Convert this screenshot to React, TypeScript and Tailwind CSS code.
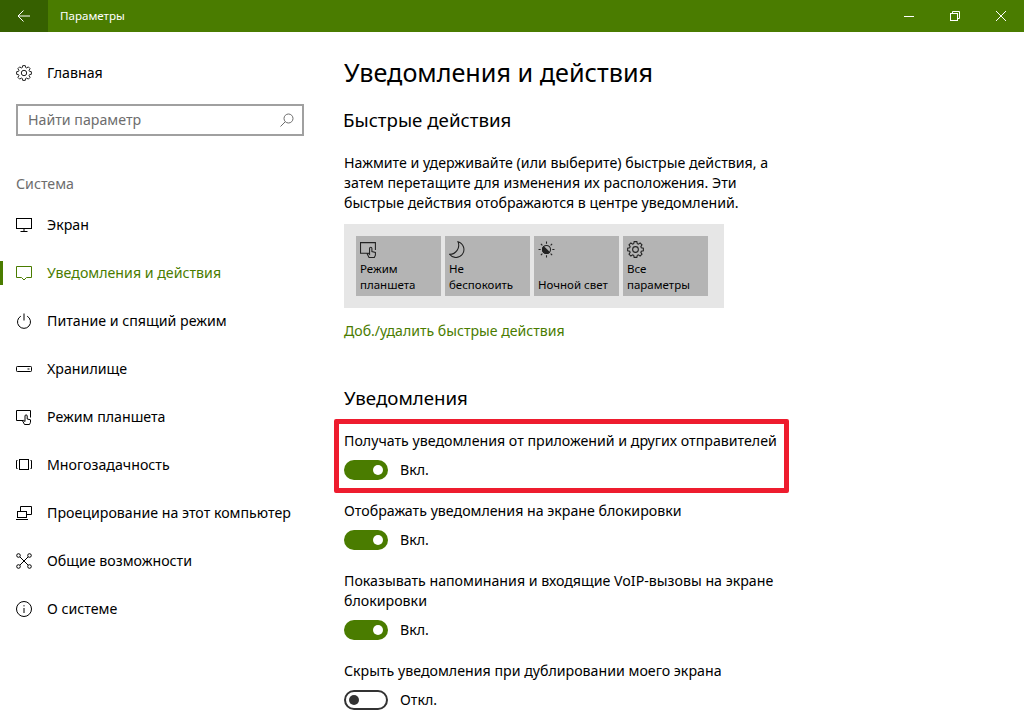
import * as React from "react";

const base = { fill: "none", stroke: "currentColor", strokeWidth: 1 } as const;

function Svg({ children, size = 16, className = "" }: { children: React.ReactNode; size?: number; className?: string }) {
  return (
    <svg width={size} height={size} viewBox="0 0 16 16" className={className} {...base}>
      {children}
    </svg>
  );
}

// eight toothed cog, same outline as the settings glyph
const gearPath = Array.from({ length: 8 }, (_, i) => {
  const a = (i * Math.PI) / 4;
  const pt = (r: number, d: number) => `${(8 + r * Math.sin(a + d)).toFixed(2)} ${(8 - r * Math.cos(a + d)).toFixed(2)}`;
  return `${i === 0 ? "M" : "L"}${pt(5.7, -0.3)}L${pt(7.5, -0.17)}L${pt(7.5, 0.17)}L${pt(5.7, 0.3)}`;
}).join("") + "Z";

const gear = (
  <>
    <path d={gearPath} />
    <circle cx="8" cy="8" r="2.7" />
  </>
);

const tablet = (
  <>
    <path d="M7 11.500H.5v-10h14v7" />
    <path d="M8.500 15.500l-1.800-3.500 1-.6 1.300 1.100V7a1.100 1.100 0 0 1 2.200 0v3l3.300.8v2.500l-1 2.200z" />
  </>
);

const NAV = [
  {
    label: "Экран",
    icon: (
      <>
        <rect x=".5" y="1.5" width="15" height="10" />
        <path d="M8 11.5v3M4.5 14.5h7" />
      </>
    ),
  },
  {
    label: "Уведомления и действия",
    active: true,
    icon: <path d="M.5 1.5h15v11h-5L8 15l-2.500-2.500h-5z" />,
  },
  {
    label: "Питание и спящий режим",
    icon: (
      <>
        <path d="M8 .5v7" />
        <path d="M4.800 3.200a6.500 6.500 0 1 0 6.400 0" />
      </>
    ),
  },
  {
    label: "Хранилище",
    icon: (
      <>
        <rect x=".5" y="5.500" width="15" height="5" rx=".8" />
        <path d="M11.500 8h2" />
      </>
    ),
  },
  { label: "Режим планшета", icon: tablet },
  {
    label: "Многозадачность",
    icon: (
      <>
        <rect x="3.500" y="2.500" width="9" height="10" />
        <path d="M1.500 3.500h-1v8h1M14.500 3.500h1v8h-1" />
      </>
    ),
  },
  {
    label: "Проецирование на этот компьютер",
    icon: (
      <>
        <path d="M4.500 6V1.500h11v8H11" />
        <rect x="1.500" y="6.500" width="9" height="6" />
        <path d="M0 14.500h12" />
      </>
    ),
  },
  {
    label: "Общие возможности",
    icon: (
      <>
        <circle cx="2.500" cy="2.500" r="1.800" />
        <circle cx="13.500" cy="2.500" r="1.800" />
        <circle cx="2.500" cy="13.500" r="1.800" />
        <circle cx="13.500" cy="13.500" r="1.800" />
        <path d="M4 4l8 8M12 4l-8 8" />
      </>
    ),
  },
  {
    label: "О системе",
    icon: (
      <>
        <circle cx="8" cy="8" r="7.500" />
        <path d="M8 7v5M8 4.200v1.200" />
      </>
    ),
  },
];

const TILES = [
  { label: "Режим планшета", icon: tablet },
  { label: "Не беспокоить", icon: <path d="M8.500 .8A7.500 7.500 0 1 1 .5 12.500 8.500 8.500 0 0 0 8.500 .8z" /> },
  {
    label: "Ночной свет",
    icon: (
      <>
        <circle cx="8" cy="8" r="3.800" />
        <path d="M5.300 5.300a3.800 3.800 0 0 0 5.400 5.400z" fill="currentColor" />
        <path d="M8 .5v2M8 13.500v2M.5 8h2M13.500 8h2M2.700 2.700l1.400 1.400M11.900 11.900l1.400 1.400M2.700 13.300l1.400-1.400M11.900 4.100l1.400-1.400" />
      </>
    ),
  },
  { label: "Все параметры", icon: gear },
];

function Toggle({ on }: { on: boolean }) {
  return (
    <div className="flex items-center h-5 gap-3">
      {on ? (
        <div className="w-11 h-5 rounded-full bg-[#4a7c00] flex items-center justify-end pr-[5px]">
          <div className="w-2.5 h-2.5 rounded-full bg-white" />
        </div>
      ) : (
        <div className="w-11 h-5 rounded-full border-2 border-[#333333] flex items-center pl-[3px]">
          <div className="w-2.5 h-2.5 rounded-full bg-[#333333]" />
        </div>
      )}
      <span>{on ? "Вкл." : "Откл."}</span>
    </div>
  );
}

function Setting({ label, on }: { label: React.ReactNode; on: boolean }) {
  return (
    <div className="flex flex-col gap-[9px]">
      <p className="leading-5">{label}</p>
      <Toggle on={on} />
    </div>
  );
}

export default function App() {
  return (
    <div className="w-[1024px] h-[728px] overflow-hidden bg-white text-[14.2px] text-black font-['Noto_Sans',sans-serif] flex flex-col">
      <header className="h-8 shrink-0 bg-[#4a7c00] text-white flex items-center">
        <div className="w-12 h-8 bg-[#366000] flex items-center justify-center">
          <svg width="14" height="14" viewBox="0 0 14 14" {...base}>
            <path d="M1 7h12M6.500 1.500L1 7l5.500 5.500" />
          </svg>
        </div>
        <span className="ml-3 text-[11.6px]">Параметры</span>
        <div className="ml-auto flex h-8">
          <div className="w-[46px] flex items-center justify-center">
            <div className="w-2.5 h-px bg-white" />
          </div>
          <div className="w-[46px] flex items-center justify-center">
            <svg width="10" height="10" viewBox="0 0 10 10" {...base}>
              <rect x=".5" y="2.500" width="7" height="7" />
              <path d="M2.500 2.500V.5h7v7h-2" />
            </svg>
          </div>
          <div className="w-[46px] flex items-center justify-center">
            <svg width="10" height="10" viewBox="0 0 10 10" {...base}>
              <path d="M0 0l10 10M10 0L0 10" />
            </svg>
          </div>
        </div>
      </header>

      <div className="flex flex-1 min-h-0">
        <aside className="w-[344px] shrink-0">
          <div className="h-12 mt-[17px] pl-4 flex items-center gap-[15px]">
            <Svg className="text-[#222222]">{gear}</Svg>
            <span>Главная</span>
          </div>
          <div className="ml-4 mt-[7px] w-[288px] h-8 border-2 border-[#a0a0a0] flex items-center justify-between pl-[10px] pr-2 text-[#6d6d6d]">
            <span>Найти параметр</span>
            <svg width="14" height="14" viewBox="0 0 14 14" {...base}>
              <circle cx="8.500" cy="5.500" r="4.500" />
              <path d="M5.200 8.800L.5 13.500" />
            </svg>
          </div>
          <div className="pl-4 mt-[38px] h-5 leading-5 text-[#6d6d6d]">Система</div>
          <nav className="mt-[7px]">
            {NAV.map((item) => (
              <div
                key={item.label}
                className={`relative h-12 pl-4 flex items-center gap-[15px] ${item.active ? "text-[#4a7c00]" : "text-black"}`}
              >
                {item.active && <div className="absolute left-0 top-3 w-[3px] h-6 bg-[#4a7c00]" />}
                <Svg>{item.icon}</Svg>
                <span className="whitespace-nowrap">{item.label}</span>
              </div>
            ))}
          </nav>
        </aside>

        <main className="flex-1 relative">
          <h1 className="text-[25.2px] leading-9 mt-[22px]">Уведомления и действия</h1>
          <h2 className="text-[18.7px] leading-7 mt-[16px] -ml-px">Быстрые действия</h2>
          <p className="leading-5 mt-[19px] w-[440px]">
            Нажмите и удерживайте (или выберите) быстрые действия, а затем перетащите для изменения их расположения. Эти
            быстрые действия отображаются в центре уведомлений.
          </p>
          <div className="mt-[11px] w-[380px] h-[84px] bg-[#e6e6e6] p-3 flex gap-1">
            {TILES.map((t) => (
              <div key={t.label} className="w-[85px] h-[60px] bg-[#b4b4b4] px-1 pt-[5px] flex flex-col text-[11.5px] leading-4">
                <Svg size={17} className="shrink-0 text-[#222222]">{t.icon}</Svg>
                <span className="mt-auto pb-[3px]">{t.label}</span>
              </div>
            ))}
          </div>
          <div className="mt-[13px] leading-5 text-[14.1px] text-[#4a7c00]">Доб./удалить быстрые действия</div>
          <h2 className="text-[18.7px] leading-7 mt-[43px]">Уведомления</h2>
          <div className="mt-[19px] w-[440px] flex flex-col gap-[21px]">
            <Setting label="Получать уведомления от приложений и других отправителей" on />
            <Setting label="Отображать уведомления на экране блокировки" on />
            <Setting label="Показывать напоминания и входящие VoIP-вызовы на экране блокировки" on />
            <Setting label="Скрыть уведомления при дублировании моего экрана" on={false} />
          </div>
          <div className="absolute left-[-10px] top-[387px] w-[455px] h-[74px] border-[5px] border-[#ee1c2e] rounded-[2px]" />
        </main>
      </div>
    </div>
  );
}
